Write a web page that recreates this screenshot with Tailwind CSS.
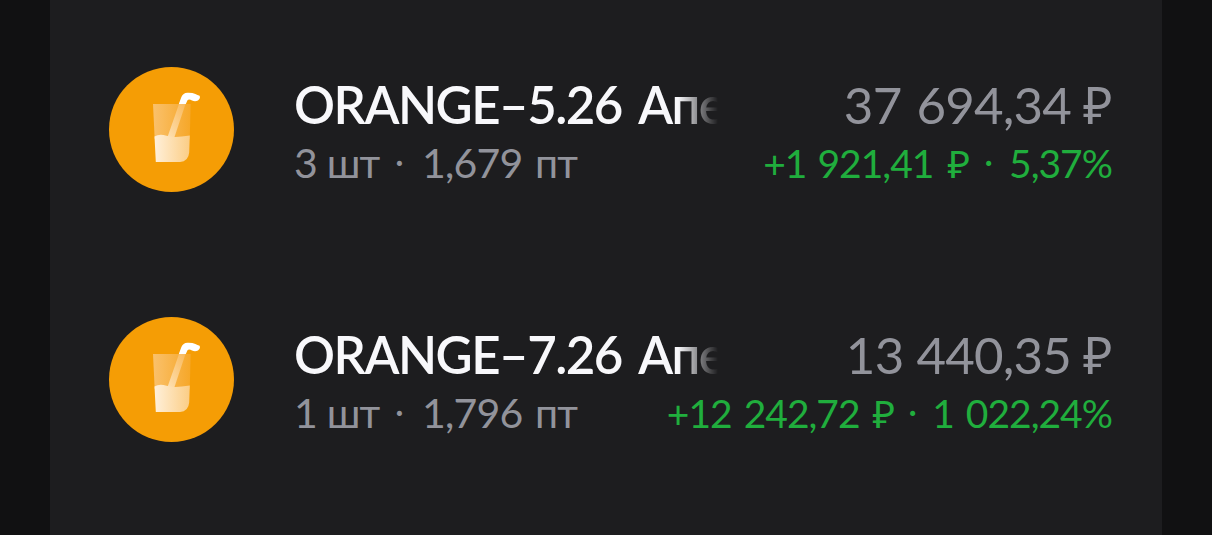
<!DOCTYPE html>
<html lang="ru">
<head>
    <meta charset="UTF-8">
    <meta name="viewport" content="width=device-width, initial-scale=1.0">
    <title>Портфель</title>
    <script src="https://cdn.jsdelivr.net/npm/@tailwindcss/browser@4"></script>
</head>
<body class="bg-[#111112] font-['Lato','Noto_Sans',sans-serif] h-screen overflow-hidden">
    <main class="mx-[50px] h-full bg-[#1d1d1f] pt-[67px] pl-[59px] pr-[50px] flex flex-col gap-[125px]">
        <div class="h-[125px] shrink-0 flex gap-[60px]">
            <svg class="size-[125px] shrink-0" viewBox="0 0 125 125">
                <defs>
                    <linearGradient id="glass" x1="0" y1="0" x2="1" y2="0">
                        <stop offset="0" stop-color="#fac16c"/>
                        <stop offset="1" stop-color="#f6a728"/>
                    </linearGradient>
                    <linearGradient id="juice" x1="0" y1="0" x2="1" y2="0">
                        <stop offset="0" stop-color="#fff0da"/>
                        <stop offset="1" stop-color="#fbcd85"/>
                    </linearGradient>
                    <linearGradient id="straw" x1="1" y1="0" x2="0" y2="1">
                        <stop offset="0" stop-color="#f9b95a"/>
                        <stop offset="1" stop-color="#fde0b3"/>
                    </linearGradient>
                </defs>
                <circle cx="62.5" cy="62.5" r="62.5" fill="#f59d05"/>
                <path d="M44 37h37.700l-1 35h-35z" fill="url(#glass)"/>
                <path d="M70 37h6.500l-11 33h-7z" fill="url(#straw)"/>
                <path d="M45.500 69.500q5-3 12-.7t23.300-.3l-.6 17q-.8 9-9.200 9.500h-24.200z" fill="url(#juice)"/>
                <path d="M69.800 37l2.600-7q1.600-4 6-4.200 5-.2 8 1.200 2 1.300 4.200 1.800 1.200 2.500-1.600 4.600-3 1.500-6 0-3-1.500-4.500-.2l-1.700 3.800z" fill="#fff"/>
            </svg>
            <div class="flex-1 pt-2 whitespace-nowrap">
                <div class="flex justify-between h-[60px] leading-[60px] text-[51px]">
                    <div class="w-[427px] font-semibold tracking-[-1.5px] [word-spacing:5px] text-[#f8f8fb] mask-r-from-[384px] mask-r-to-[424px]">ORANGE–5.26 Апе</div>
                    <div class="flex tracking-[-0.8px] text-[#92939b]">
                        <span>37</span><span class="ml-[15px]">694,34</span><span class="ml-[12px]">₽</span>
                    </div>
                </div>
                <div class="flex justify-between h-14 leading-14">
                    <div class="flex text-[41px] tracking-[-0.8px] text-[#92939b]">
                        <span class="w-[101px]">3 шт</span><span class="w-[27px] text-[34px] -mt-0.5">·</span><span class="w-[113px]">1,679</span><span>пт</span>
                    </div>
                    <div class="flex text-[39px] tracking-[-1px] text-[#20ae3d]">
                        <span>+1</span><span class="ml-[11px]">921,41</span><span class="ml-[14px]">₽</span><span class="ml-[15px] text-[34px] -mt-0.5">·</span><span class="ml-[17px]">5,37%</span>
                    </div>
                </div>
            </div>
        </div>

        <div class="h-[125px] shrink-0 flex gap-[60px]">
            <svg class="size-[125px] shrink-0" viewBox="0 0 125 125">
                <circle cx="62.5" cy="62.5" r="62.5" fill="#f59d05"/>
                <path d="M44 37h37.700l-1 35h-35z" fill="url(#glass)"/>
                <path d="M70 37h6.500l-11 33h-7z" fill="url(#straw)"/>
                <path d="M45.500 69.500q5-3 12-.7t23.300-.3l-.6 17q-.8 9-9.200 9.500h-24.200z" fill="url(#juice)"/>
                <path d="M69.800 37l2.600-7q1.600-4 6-4.200 5-.2 8 1.200 2 1.300 4.200 1.800 1.200 2.500-1.600 4.600-3 1.500-6 0-3-1.500-4.500-.2l-1.700 3.800z" fill="#fff"/>
            </svg>
            <div class="flex-1 pt-2 whitespace-nowrap">
                <div class="flex justify-between h-[60px] leading-[60px] text-[51px]">
                    <div class="w-[427px] font-semibold tracking-[-1.5px] [word-spacing:5px] text-[#f8f8fb] mask-r-from-[384px] mask-r-to-[424px]">ORANGE–7.26 Апе</div>
                    <div class="flex tracking-[-0.8px] text-[#92939b]">
                        <span>13</span><span class="ml-[13px]">440,35</span><span class="ml-[12px]">₽</span>
                    </div>
                </div>
                <div class="flex justify-between h-14 leading-14">
                    <div class="flex text-[41px] tracking-[-0.8px] text-[#92939b]">
                        <span class="w-[101px]">1 шт</span><span class="w-[27px] text-[34px] -mt-0.5">·</span><span class="w-[113px]">1,796</span><span>пт</span>
                    </div>
                    <div class="flex text-[39px] tracking-[-1px] text-[#20ae3d]">
                        <span>+12</span><span class="ml-[12px]">242,72</span><span class="ml-[13px]">₽</span><span class="ml-[14px] text-[34px] -mt-0.5">·</span><span class="ml-[16px]">1</span><span class="ml-[12px]">022,24%</span>
                    </div>
                </div>
            </div>
        </div>
    </main>
</body>
</html>
